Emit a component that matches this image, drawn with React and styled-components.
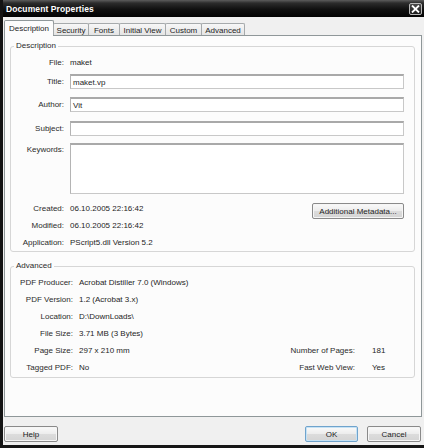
import React from 'react';
import styled, { createGlobalStyle } from 'styled-components';

const GlobalStyle = createGlobalStyle`
  html, body {
    margin: 0;
    padding: 0;
    background: #f0f0f0;
  }
  body {
    font-family: "Liberation Sans", Arial, sans-serif;
    font-size: 8px;
    color: #1e1e1e;
  }
`;

const Window = styled.div`
  width: 424px;
  height: 448px;
  box-sizing: border-box;
  display: flex;
  flex-direction: column;
  background: #f0f0f0;
  border-left: 3px solid #141414;
  border-bottom: 3px solid #161616;
  overflow: hidden;
`;

const TitleBar = styled.div`
  height: 17px;
  flex: none;
  display: flex;
  align-items: center;
  justify-content: space-between;
  padding: 0 2px 0 3px;
  background: linear-gradient(#5c5c5c 0, #2c2c2c 18%, #101010 55%, #020202 100%);
  color: #fff;
  font-weight: bold;
  font-size: 8.5px;
  letter-spacing: 0.1px;
`;

const CloseBox = styled.div`
  width: 13px;
  height: 12px;
  box-sizing: border-box;
  border: 1px solid #b8b8b8;
  border-radius: 2px;
  background: linear-gradient(#4a4a4a, #1c1c1c);
  display: flex;
  align-items: center;
  justify-content: center;
`;

const Body = styled.div`
  flex: 1;
  display: flex;
  flex-direction: column;
  padding: 3px 2px 0 1px;
`;

const TabStrip = styled.div`
  height: 15px;
  flex: none;
  display: flex;
  align-items: flex-end;
  position: relative;
  z-index: 1;
`;

const Tab = styled.div`
  width: ${(p) => p.w}px;
  height: ${(p) => (p.active ? 16 : 12)}px;
  margin-bottom: ${(p) => (p.active ? -1 : 0)}px;
  margin-left: ${(p) => (p.first ? 0 : -1)}px;
  box-sizing: border-box;
  border: 1px solid ${(p) => (p.active ? '#8f9799' : '#a6aaac')};
  border-bottom: none;
  border-radius: 2px 2px 0 0;
  background: ${(p) =>
    p.active ? '#fcfcfc' : 'linear-gradient(#f7f7f7, #e4e4e4)'};
  display: flex;
  align-items: center;
  justify-content: center;
  padding-top: ${(p) => (p.active ? 0 : 1)}px;
  white-space: nowrap;
`;

const Panel = styled.div`
  height: 382px;
  flex: none;
  box-sizing: border-box;
  border: 1px solid #8f9799;
  background: #fcfcfc;
  padding: 5px 6px 0 5px;
`;

const Group = styled.fieldset`
  margin: 0;
  margin-top: ${(p) => p.top || 0}px;
  padding: ${(p) => p.pad};
  border: 1px solid #d6d6d6;
  border-radius: 3px;
  min-width: 0;
`;

const Legend = styled.legend`
  margin-left: 3px;
  padding: 0 2px;
  line-height: 10px;
  color: #2a2a2a;
`;

const Row = styled.div`
  display: flex;
  align-items: ${(p) => (p.tall ? 'flex-start' : 'center')};
  height: ${(p) => p.h || 15}px;
  margin-top: ${(p) => p.top || 0}px;
`;

const Label = styled.div`
  width: ${(p) => p.w || 53}px;
  flex: none;
  text-align: right;
  margin-right: 6px;
  color: #2b2b2b;
  line-height: ${(p) => (p.tall ? '11px' : 'normal')};
  padding-top: ${(p) => (p.tall ? 1 : 0)}px;
`;

const Value = styled.div`
  white-space: nowrap;
`;

const Field = styled.div`
  flex: 1;
  height: 100%;
  box-sizing: border-box;
  background: #fff;
  border: 1px solid #c8c8c8;
  border-top: 2px solid #a9a9a9;
  border-left-color: #b4b4b4;
  padding: 1px 2px 0;
  display: flex;
  align-items: ${(p) => (p.multi ? 'flex-start' : 'center')};
`;

const Dates = styled.div`
  display: flex;
  margin-top: 6px;
`;

const DateRows = styled.div`
  flex: 1;
  display: flex;
  flex-direction: column;
  gap: 1px;
`;

const Button = styled.button`
  width: ${(p) => p.w}px;
  height: 16px;
  margin-top: ${(p) => p.top || 0}px;
  padding: 0;
  box-sizing: border-box;
  font-family: inherit;
  font-size: 8px;
  color: #1e1e1e;
  border: 1px solid ${(p) => (p.primary ? '#6fa3cc' : '#8a8a8a')};
  border-radius: 2px;
  background: linear-gradient(#fafafa 0, #ececec 50%, #dcdcdc 51%, #d4d4d4 100%);
  box-shadow: inset 0 0 0 1px ${(p) => (p.primary ? '#c6e2f5' : '#f6f6f6')};
`;

const AdvancedGrid = styled.div`
  display: grid;
  grid-template-columns: 62px 1fr auto 42px;
  grid-auto-rows: 17px;
  align-items: center;
  column-gap: 6px;
`;

const GridLabel = styled.div`
  text-align: right;
  white-space: nowrap;
  color: #2b2b2b;
  padding-right: ${(p) => (p.second ? 11 : 0)}px;
`;

const Footer = styled.div`
  flex: 1;
  display: flex;
  align-items: flex-start;
  padding-top: 9px;
  padding-right: 1px;
  gap: 9px;
`;

const Spacer = styled.div`
  flex: 1;
`;

const tabs = [
  ['Description', 50],
  ['Security', 36],
  ['Fonts', 32],
  ['Initial View', 47],
  ['Custom', 37],
  ['Advanced', 44],
];

const advanced = [
  ['PDF Producer:', 'Acrobat Distiller 7.0 (Windows)'],
  ['PDF Version:', '1.2 (Acrobat 3.x)'],
  ['Location:', 'D:\\DownLoads\\'],
  ['File Size:', '3.71 MB (3 Bytes)'],
  ['Page Size:', '297 x 210 mm', 'Number of Pages:', '181'],
  ['Tagged PDF:', 'No', 'Fast Web View:', 'Yes'],
];

export default function App() {
  return (
    <>
      <GlobalStyle />
      <Window>
        <TitleBar>
          <span>Document Properties</span>
          <CloseBox>
            <svg width="9" height="8" viewBox="0 0 9 8">
              <path d="M1 0.5 L8 7.5 M8 0.5 L1 7.5" stroke="#fff" strokeWidth="1.8" />
            </svg>
          </CloseBox>
        </TitleBar>
        <Body>
          <TabStrip>
            {tabs.map(([name, w], i) => (
              <Tab key={name} w={w} first={i === 0} active={i === 0}>
                {name}
              </Tab>
            ))}
          </TabStrip>
          <Panel>
            <Group pad="4px 10px 1px 0">
              <Legend>Description</Legend>
              <Row>
                <Label>File:</Label>
                <Value>maket</Value>
              </Row>
              <Row top={4}>
                <Label>Title:</Label>
                <Field>maket.vp</Field>
              </Row>
              <Row top={8}>
                <Label>Author:</Label>
                <Field>Vit</Field>
              </Row>
              <Row top={9}>
                <Label>Subject:</Label>
                <Field />
              </Row>
              <Row top={7} h={51} tall>
                <Label tall>Keywords:</Label>
                <Field multi />
              </Row>
              <Dates>
                <DateRows>
                  <Row h={16}>
                    <Label>Created:</Label>
                    <Value>06.10.2005 22:16:42</Value>
                  </Row>
                  <Row h={16}>
                    <Label>Modified:</Label>
                    <Value>06.10.2005 22:16:42</Value>
                  </Row>
                  <Row h={16}>
                    <Label>Application:</Label>
                    <Value>PScript5.dll Version 5.2</Value>
                  </Row>
                </DateRows>
                <Button w={92} top={3}>Additional Metadata...</Button>
              </Dates>
            </Group>
            <Group top={9} pad="3px 0 1px 0">
              <Legend>Advanced</Legend>
              <AdvancedGrid>
                {advanced.map(([l, v, l2, v2]) => (
                  <React.Fragment key={l}>
                    <GridLabel>{l}</GridLabel>
                    <Value>{v}</Value>
                    <GridLabel second>{l2}</GridLabel>
                    <Value>{v2}</Value>
                  </React.Fragment>
                ))}
              </AdvancedGrid>
            </Group>
          </Panel>
          <Footer>
            <Button w={54}>Help</Button>
            <Spacer />
            <Button w={53} primary>OK</Button>
            <Button w={54}>Cancel</Button>
          </Footer>
        </Body>
      </Window>
    </>
  );
}
